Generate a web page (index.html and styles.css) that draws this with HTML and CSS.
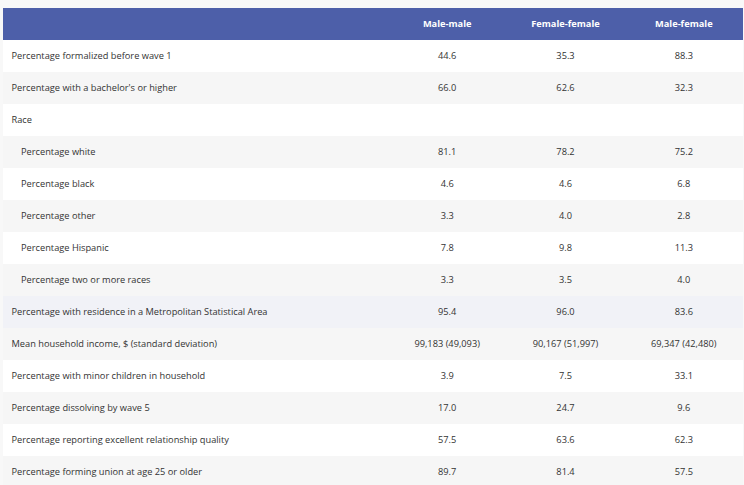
FILE: index.html
```html
<!DOCTYPE html>
<html lang="en">
<head>
<meta charset="utf-8">
<title>Table</title>
<link rel="stylesheet" href="styles.css">
</head>
<body>
<div class="wrap">
<table class="tbl">
<colgroup>
<col class="c-label"><col class="c-val"><col class="c-val"><col class="c-val">
</colgroup>
<thead>
<tr><th class="lbl"></th><th>Male-male</th><th>Female-female</th><th>Male-female</th></tr>
</thead>
<tbody>
<tr><td class="lbl">Percentage formalized before wave 1</td><td>44.6</td><td>35.3</td><td>88.3</td></tr>
<tr><td class="lbl">Percentage with a bachelor's or higher</td><td>66.0</td><td>62.6</td><td>32.3</td></tr>
<tr><td class="lbl">Race</td><td></td><td></td><td></td></tr>
<tr><td class="lbl sub">Percentage white</td><td>81.1</td><td>78.2</td><td>75.2</td></tr>
<tr><td class="lbl sub">Percentage black</td><td>4.6</td><td>4.6</td><td>6.8</td></tr>
<tr><td class="lbl sub">Percentage other</td><td>3.3</td><td>4.0</td><td>2.8</td></tr>
<tr><td class="lbl sub">Percentage Hispanic</td><td>7.8</td><td>9.8</td><td>11.3</td></tr>
<tr><td class="lbl sub">Percentage two or more races</td><td>3.3</td><td>3.5</td><td>4.0</td></tr>
<tr class="hover"><td class="lbl">Percentage with residence in a Metropolitan Statistical Area</td><td>95.4</td><td>96.0</td><td>83.6</td></tr>
<tr><td class="lbl">Mean household income, $ (standard deviation)</td><td>99,183 (49,093)</td><td>90,167 (51,997)</td><td>69,347 (42,480)</td></tr>
<tr><td class="lbl">Percentage with minor children in household</td><td>3.9</td><td>7.5</td><td>33.1</td></tr>
<tr><td class="lbl">Percentage dissolving by wave 5</td><td>17.0</td><td>24.7</td><td>9.6</td></tr>
<tr><td class="lbl">Percentage reporting excellent relationship quality</td><td>57.5</td><td>63.6</td><td>62.3</td></tr>
<tr><td class="lbl">Percentage forming union at age 25 or older</td><td>89.7</td><td>81.4</td><td>57.5</td></tr>
</tbody>
</table>
</div>
</body>
</html>
```
FILE: styles.css
```css
html, body {
  margin: 0;
  padding: 0;
  background: #f8f8f8;
}
body {
  font-family: "Open Sans", "DejaVu Sans", sans-serif;
  font-size: 9.25px;
  line-height: 12px;
  color: #333333;
}
.wrap {
  padding: 8px 1px 0 3px;
}
.tbl {
  width: 740px;
  border-collapse: collapse;
  border-spacing: 0;
  table-layout: fixed;
}
.c-label { width: 385px; }
.c-val { width: 118.33px; }
.tbl th,
.tbl td {
  box-sizing: border-box;
  height: 32px;
  padding: 0 0 1px 0;
  text-align: center;
  vertical-align: middle;
  white-space: nowrap;
}
.tbl th {
  background: #4d5fa9;
  color: #ffffff;
  font-weight: 700;
}
.tbl td.lbl {
  text-align: left;
  padding-left: 8.5px;
}
.tbl td.sub {
  padding-left: 18px;
}
.tbl tbody tr:nth-child(odd) { background: #ffffff; }
.tbl tbody tr:nth-child(even) { background: #f6f6f6; }
.tbl tbody tr.hover { background: #f1f2f7; }
```
